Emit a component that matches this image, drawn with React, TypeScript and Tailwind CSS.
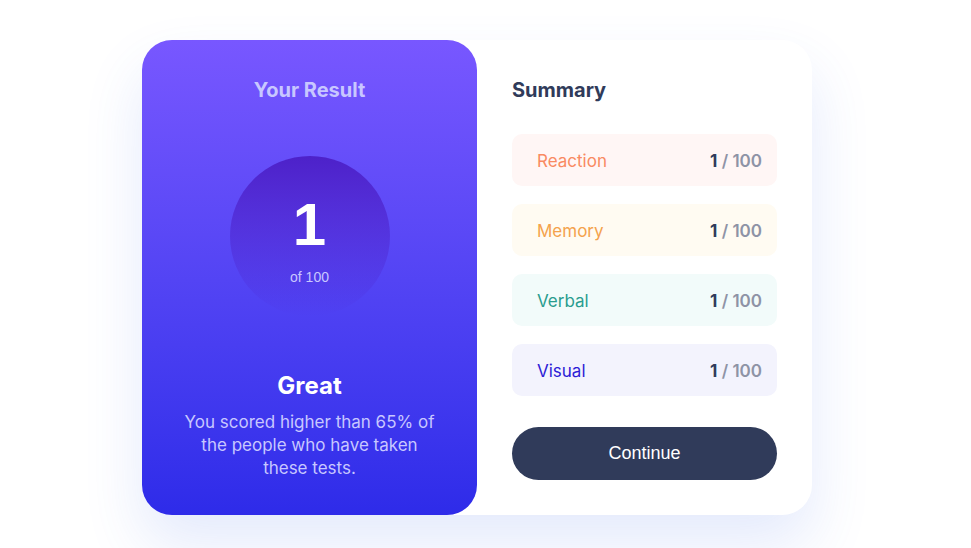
import React from 'react';

const rows = [
  { label: 'Reaction', bg: 'bg-[#fff6f5]', text: 'text-[#f98a62]' },
  { label: 'Memory', bg: 'bg-[#fffbf2]', text: 'text-[#f4a24d]' },
  { label: 'Verbal', bg: 'bg-[#f2fbfa]', text: 'text-[#2a9d8f]' },
  { label: 'Visual', bg: 'bg-[#f3f3fd]', text: 'text-[#2e1dd6]' },
];

export default function App() {
  return (
    <div className="min-h-screen w-full bg-white pl-[142px] pt-[40px] font-['Inter',sans-serif]">
      <div className="flex w-[670px] h-[475px] rounded-[30px] bg-white shadow-[0_30px_60px_rgba(61,108,236,0.14)]">
        <div className="w-[335px] shrink-0 rounded-[30px] bg-gradient-to-b from-[#7857ff] to-[#2e2be9] flex flex-col items-center pt-[38px]">
          <h2 className="text-[20px] font-bold text-[#c8c7ff] leading-[24px]">Your Result</h2>
          <div className="mt-[54px] w-[160px] h-[160px] rounded-full bg-gradient-to-b from-[#4d21c9] to-[rgba(37,33,201,0)] flex flex-col items-center justify-center font-['Liberation_Sans',Arial,sans-serif]">
            <span className="text-[60px] font-bold leading-none text-white mt-[10px]">1</span>
            <span className="text-[14px] text-[#c8c7ff] mt-[12px]">of 100</span>
          </div>
          <h3 className="mt-[55px] text-[24px] font-bold text-white leading-[30px]">Great</h3>
          <p className="mt-[10px] w-[260px] text-center text-[17px] leading-[23px] text-[#c8c7ff]">
            You scored higher than 65% of the people who have taken these tests.
          </p>
        </div>
        <div className="flex-1 pl-[35px] pr-[35px] pt-[38px] flex flex-col">
          <h2 className="text-[20px] font-bold text-[#303b5a] leading-[24px]">Summary</h2>
          <div className="mt-[32px] flex flex-col gap-[18px]">
            {rows.map((r) => (
              <div key={r.label} className={`${r.bg} h-[52px] rounded-[10px] flex items-center justify-between pl-[25px] pr-[15px] pt-[3px]`}>
                <span className={`${r.text} text-[17px]`}>{r.label}</span>
                <span className="text-[17px] font-semibold text-[#8e93a6]">
                  <span className="font-bold text-[#303b5a]">1</span> / 100
                </span>
              </div>
            ))}
          </div>
          <button className="mt-[31px] h-[53px] w-full rounded-full bg-[#303b5a] text-white text-[18px] font-['Liberation_Sans',Arial,sans-serif]">
            Continue
          </button>
        </div>
      </div>
    </div>
  );
}
